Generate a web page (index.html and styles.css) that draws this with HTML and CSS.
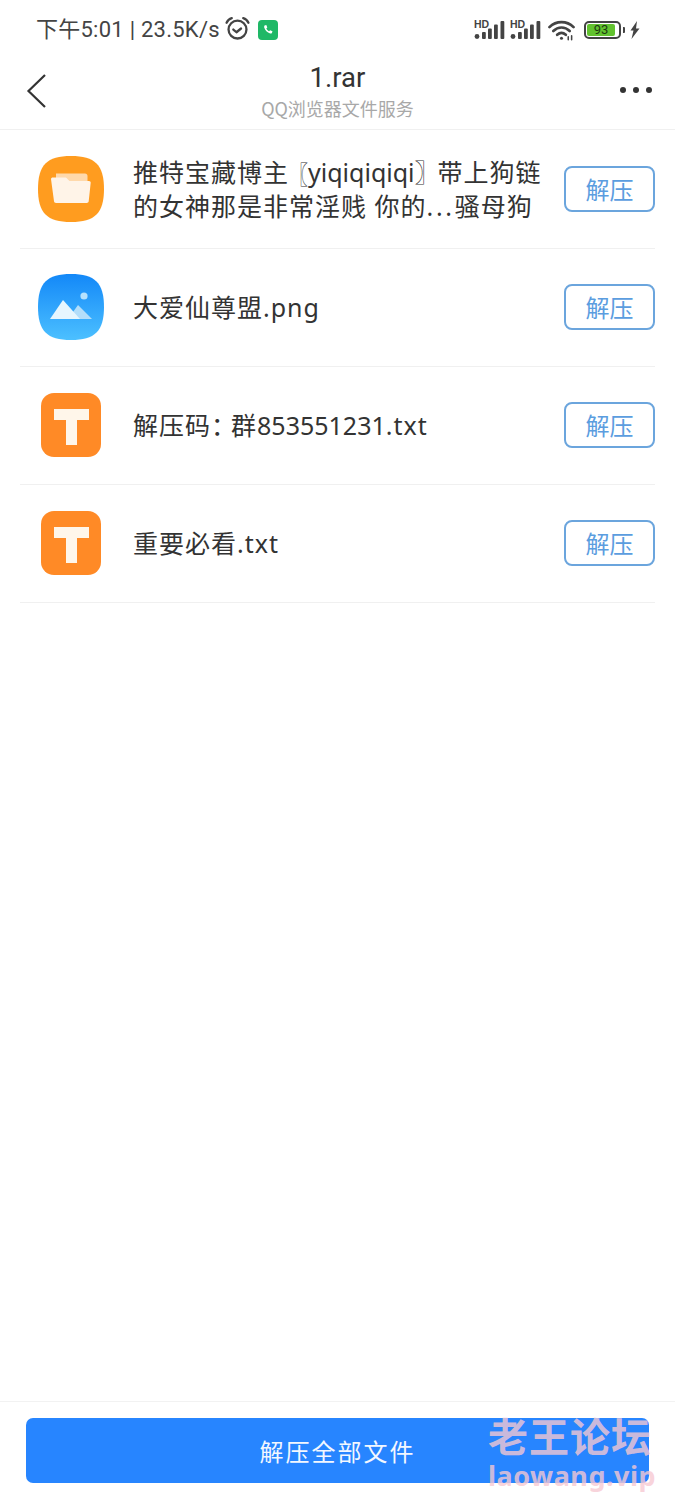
FILE: index.html
```html
<!DOCTYPE html>
<html lang="zh-CN">
<head>
<meta charset="utf-8">
<title>1.rar</title>
<link rel="stylesheet" href="styles.css">
</head>
<body>
<div class="page">
  <div class="status">
    <div class="status-left">
      <span class="status-text">下午5:01 | 23.5K/s</span>
      <svg class="alarm" width="25" height="25" viewBox="0 0 24 24" fill="none" stroke="#444" stroke-width="2.200" stroke-linecap="round" stroke-linejoin="round"><circle cx="12" cy="13" r="8.600"/><path d="M8 13l3 2.600 4.400-3.600"/><path d="M1.500 6.500C2.500 4 4.500 2.500 6.500 2M22.500 6.500C21.500 4 19.500 2.500 17.500 2"/></svg>
      <svg class="call" width="20" height="20" viewBox="0 0 20 20"><rect width="20" height="20" rx="4" fill="#1fb866"/><path d="M6.500 5.500l1.800-.6 1 2.500-1 1c.5 1.200 1.500 2.200 2.800 2.800l1-1 2.400 1-.6 1.900c-.4.500-1 .6-1.700.4-3-.9-5.100-3-6-5.900-.2-.7 0-1.300.3-2.100z" fill="#fff"/></svg>
    </div>
    <div class="status-right">
      <svg width="31" height="22" viewBox="0 0 31 22" fill="#444"><text class="hd" x="0" y="9">HD</text><circle cx="3" cy="17.500" r="2.400"/><rect x="8" y="13" width="3.800" height="7" rx="1"/><rect x="14" y="9.500" width="3.800" height="10.500" rx="1"/><rect x="20" y="5.500" width="3.800" height="14.500" rx="1"/><rect x="26.500" y="2" width="3.800" height="18" rx="1"/></svg>
      <svg width="31" height="22" viewBox="0 0 31 22" fill="#444"><text class="hd" x="0" y="9">HD</text><circle cx="3" cy="17.500" r="2.400"/><rect x="8" y="13" width="3.800" height="7" rx="1"/><rect x="14" y="9.500" width="3.800" height="10.500" rx="1"/><rect x="20" y="5.500" width="3.800" height="14.500" rx="1"/><rect x="26.500" y="2" width="3.800" height="18" rx="1"/></svg>
      <svg class="wifi" width="27" height="22" viewBox="0 0 28 22" fill="none" stroke="#444" stroke-width="2.800" stroke-linecap="round"><path d="M1.500 8C8.500 1 19.500 1 26.500 8"/><path d="M5.500 12c5-4.800 12-4.800 17 0"/><path d="M9.500 16c2.800-2.600 6.200-2.600 9 0"/><circle cx="14" cy="19.500" r="1.600" fill="#444" stroke="none"/><path d="M21 18v3M24.500 17v4" stroke-width="1.600"/></svg>
      <div class="battery"><div class="battery-body"><span class="battery-fill">93</span></div><span class="battery-cap"></span></div>
      <svg class="bolt" width="10" height="18" viewBox="0 0 10 18" fill="#444"><path d="M7 0L0.500 9.500 3.500 9.500 1.500 18 9.500 7.500 6 7.500 z"/></svg>
    </div>
  </div>

  <header class="nav">
    <svg class="back" width="22" height="36" viewBox="0 0 22 36" fill="none" stroke="#333" stroke-width="2.200"><path d="M19 2L2.500 18 19 34"/></svg>
    <div class="nav-title">
      <div class="title">1.rar</div>
      <div class="subtitle">QQ浏览器文件服务</div>
    </div>
    <div class="more"><span></span><span></span><span></span></div>
  </header>

  <main class="list">
    <div class="row">
      <div class="icon-box">
        <svg width="66" height="66" viewBox="0 0 66 66"><path d="M33 0C57 0 66 9 66 33S57 66 33 66 0 57 0 33 9 0 33 0z" fill="#ff9c1f"/><path d="M18 17.500h29c1.500 0 2.500 1 2.500 2.500v8H18z" fill="#ffd9ab"/><path d="M13 23c0-1 .8-1.600 1.800-1.600H27c1 0 1.500.4 2 1l2.500 2.600H51c1 0 1.800.8 1.700 1.800l-2 18.500c-.1 1-1 1.700-2 1.700H18c-1 0-1.900-.7-2-1.700z" fill="#fff4e8"/></svg>
      </div>
      <div class="name">推特宝藏博主<span class="open">〖</span><span class="tight">yiqiqiqiqi</span><span class="close">〗</span>带上狗链<br>的女神那是非常淫贱 你的<span class="dots">...</span>骚母狗</div>
      <button class="btn">解压</button>
    </div>
    <div class="row">
      <div class="icon-box">
        <svg width="66" height="66" viewBox="0 0 66 66"><defs><linearGradient id="sky" x1="0" y1="0" x2="0" y2="1"><stop offset="0" stop-color="#1388f8"/><stop offset="1" stop-color="#4cc0ff"/></linearGradient></defs><path d="M33 0C57 0 66 9 66 33S57 66 33 66 0 57 0 33 9 0 33 0z" fill="url(#sky)"/><circle cx="46" cy="22" r="3.600" fill="#b5e1fd"/><path d="M30 45L40 31 54 45z" fill="#b3defa"/><path d="M12 45L25 26 42 45z" fill="#e6f6fe"/></svg>
      </div>
      <div class="name">大爱仙尊盟.png</div>
      <button class="btn">解压</button>
    </div>
    <div class="row">
      <div class="icon-box">
        <div class="txt-icon"><span class="t-bar"></span><span class="t-stem"></span></div>
      </div>
      <div class="name">解压码<span class="colon">：</span>群<span class="tight">853551231</span>.txt</div>
      <button class="btn">解压</button>
    </div>
    <div class="row">
      <div class="icon-box">
        <div class="txt-icon"><span class="t-bar"></span><span class="t-stem"></span></div>
      </div>
      <div class="name">重要必看.txt</div>
      <button class="btn">解压</button>
    </div>
  </main>

  <footer class="footer">
    <button class="primary">解压全部文件</button>
  </footer>

  <div class="watermark">
    <div class="wm-cn">老王论坛</div>
    <div class="wm-en">laowang.vip</div>
  </div>
</div>
</body>
</html>
```
FILE: styles.css
```css
* { box-sizing: border-box; }
html, body { margin: 0; padding: 0; background: #fff; }
body { font-family: "Noto Sans CJK SC", "Noto Sans", sans-serif; color: #333; }
.page { position: relative; width: 675px; height: 1500px; display: flex; flex-direction: column; overflow: hidden; }

.status { height: 56px; flex: none; display: flex; justify-content: space-between; align-items: center; padding: 4px 35px 0 36px; }
.status-left { display: flex; align-items: center; }
.status-text { font-size: 22px; line-height: 28px; letter-spacing: .25px; color: #444; white-space: nowrap; font-family: "Roboto", "Noto Sans CJK SC", sans-serif; }
.alarm { margin: -3px 0 0 5px; }
.call { margin: 0 0 0 8px; }
.status-right { display: flex; align-items: center; gap: 5px; }
.hd { font: 700 10.500px "Liberation Sans", sans-serif; }
.wifi { margin-left: 2px; }
.battery { display: flex; align-items: center; margin-left: 4px; }
.battery-body { width: 37px; height: 18px; border: 2px solid #444; border-radius: 5px; padding: 1px; display: flex; }
.battery-fill { width: 28px; background: #62c22f; border-radius: 2px; font: 13px/12px "Roboto", sans-serif; color: #1d3a10; text-align: center; }
.battery-cap { width: 2px; height: 6px; background: #444; margin-left: 2px; border-radius: 0 1px 1px 0; }

.nav { height: 74px; flex: none; position: relative; display: flex; align-items: center; justify-content: space-between; padding: 0 23px 6px 26px; border-bottom: 1px solid #f0f0f0; }
.back { flex: none; margin-top: 2px; }
.nav-title { position: absolute; left: 0; right: 0; top: 4px; text-align: center; }
.title { font: 27.500px/36px "Roboto", "Noto Sans CJK SC", sans-serif; color: #333; }
.subtitle { font-size: 18px; line-height: 24px; color: #a8a8a8; }
.more { display: flex; gap: 7px; margin-top: 1px; }
.more span { width: 6px; height: 6px; border-radius: 50%; background: #333; }

.list { flex: 1; padding: 1px 20px 0; }
.row { height: 118px; display: flex; align-items: center; padding-bottom: 2px; border-bottom: 1px solid #f0f0f0; }
.icon-box { width: 113px; flex: none; padding-left: 18px; }
.icon-box svg { display: block; }
.name { flex: 1; min-width: 0; font-size: 25px; line-height: 34px; letter-spacing: 1px; color: #333; font-family: "Noto Sans", "Noto Sans CJK SC", sans-serif; white-space: nowrap; }
.tight { letter-spacing: 0; }
.open { display: inline-block; font-size: 19px; line-height: 24px; letter-spacing: 0; transform: scaleY(1.3); }
.close { letter-spacing: -2px; }
.colon { letter-spacing: -5px; }
.dots { letter-spacing: 2.700px; }
.btn { flex: none; width: 91px; height: 46px; border: 2px solid #6ba5dd; border-radius: 8px; background: #fff; color: #5b9ddf; font: 24px/1 "Noto Sans CJK SC", sans-serif; padding: 0; }

.txt-icon { width: 60px; height: 64px; margin-left: 3px; background: #ff8a26; border-radius: 13px; display: flex; flex-direction: column; align-items: center; padding-top: 16px; }
.t-bar { width: 35px; height: 11px; background: #fff6ea; }
.t-stem { width: 11px; height: 25px; background: #fff6ea; }

.footer { height: 99px; flex: none; border-top: 1px solid #f2f2f2; padding: 16px 26px 0; }
.primary { display: block; width: 623px; height: 65px; border: 0; border-radius: 7px; background: #2785ff; color: #f2f7ff; font: 24px/1 "Noto Sans CJK SC", sans-serif; letter-spacing: 2px; padding: 0; }

.watermark { position: absolute; left: 488px; top: 1411px; color: rgba(247, 200, 210, .8); font-weight: 700; pointer-events: none; }
.wm-cn { font-size: 40px; line-height: 49px; letter-spacing: 1px; white-space: nowrap; }
.wm-en { font: 700 27px/28px "Noto Sans", sans-serif; letter-spacing: .5px; margin-top: 2px; white-space: nowrap; }
```
